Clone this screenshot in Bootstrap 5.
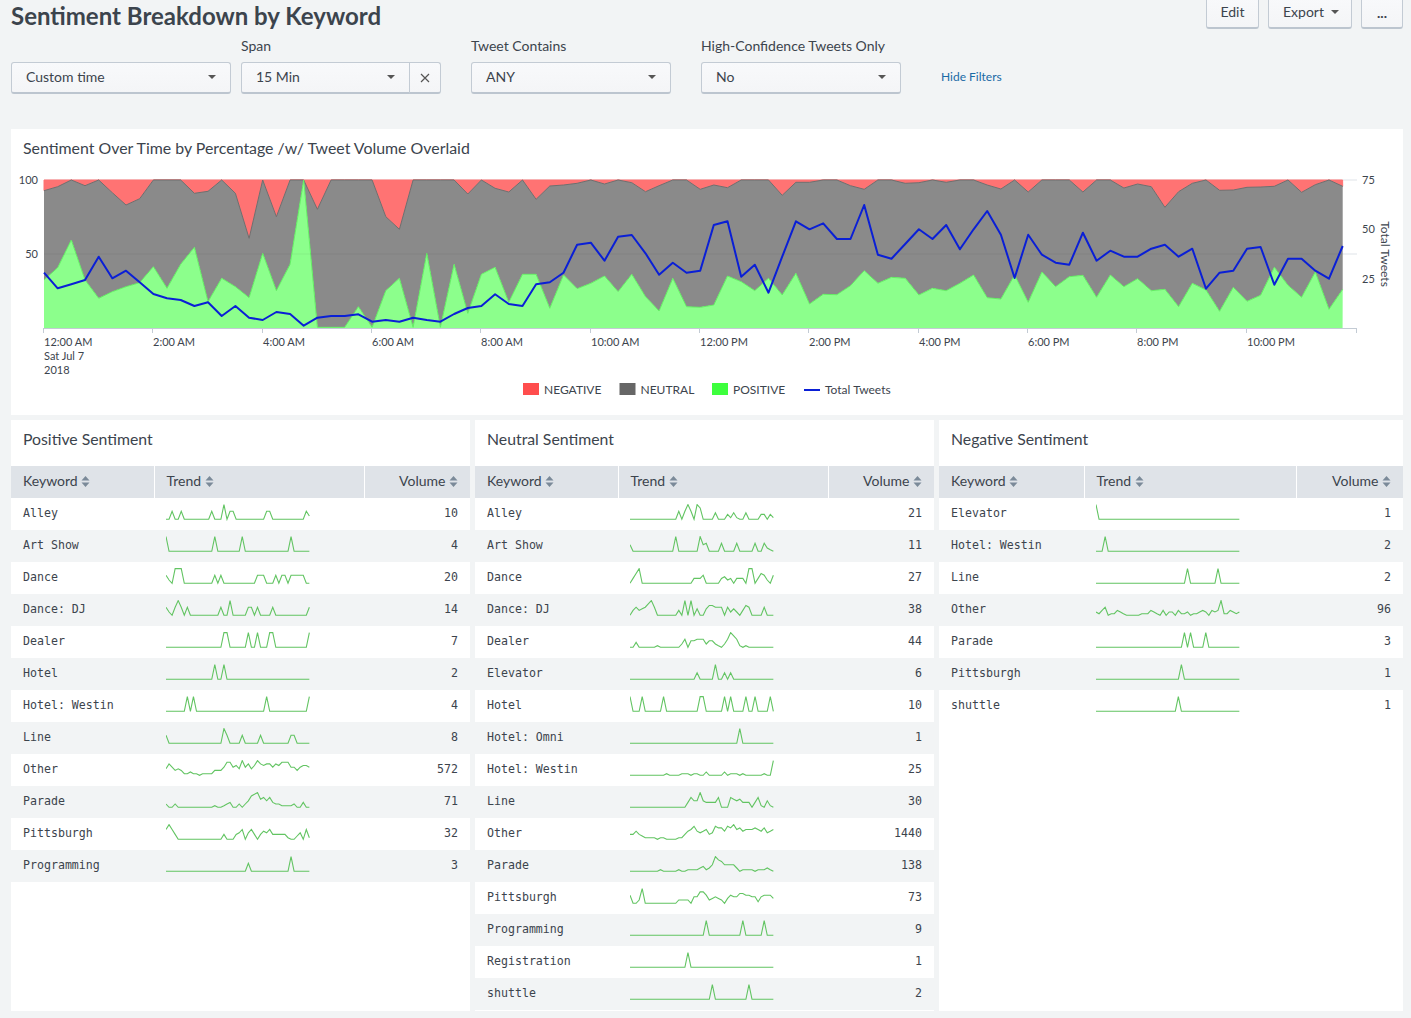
<!DOCTYPE html>
<html lang="en">
<head>
<meta charset="utf-8">
<title>Sentiment Breakdown by Keyword</title>
<link href="https://cdn.jsdelivr.net/npm/bootstrap@5.3.0/dist/css/bootstrap.min.css" rel="stylesheet">
<style>
html,body{height:100%}
body{background:#f2f4f5;color:#3c444d;font-family:"Lato","Liberation Sans",sans-serif;font-size:14px;overflow:hidden}
.dash-wrap{padding:0 8px 0 11px}
.dash-title{font-size:24px;line-height:32px;font-weight:700;margin:0}
.act-row{margin-top:-3px;gap:9px}
.act-btn,.flt-btn{background:linear-gradient(#f8f9fb,#f4f5f7);border:1px solid #c3cbd4;border-bottom:2px solid #bcc5cf;border-radius:3px;color:#3c444d;font-size:14px;height:32px;padding:0 14px 2px;display:flex;align-items:center}
.act-btn:hover,.flt-btn:hover{background:#f4f5f7;color:#3c444d;border-color:#c3cbd4}
.act-btn.dropdown-toggle::after,.flt-btn.dropdown-toggle::after{border-top-width:4px;border-left-width:4px;border-right-width:4px;border-top-color:#555;margin-left:8px}
.act-edit{width:53px;justify-content:center;padding:0 0 2px}
.act-export{width:84px;padding:0 0 2px 14px}
.act-export.dropdown-toggle::after{margin-left:7px}
.act-more{width:42px;justify-content:center;padding:0;font-weight:700}
.flt-row{margin-top:4px;gap:10px}
.flt-label{font-size:14px;line-height:20px;height:20px;margin-bottom:6px}
.flt-btn{justify-content:space-between;width:200px;text-align:left}
.flt-first{width:220px}
.flt-wide{margin-left:20px}
.flt-span .flt-btn{width:169px;border-radius:3px 0 0 3px}
.flt-span .flt-x{width:32px;flex:0 0 32px;border-radius:0 3px 3px 0;padding:0;justify-content:center}
.flt-link{font-size:12px;color:#1a6aa5;text-decoration:none;margin-left:30px;line-height:30px;height:32px}
.chart-panel{background:#fff;margin-top:35px;height:286px}
.chart-head{height:40px;padding:9px 12px 0;font-size:15.9px;line-height:20px}
.chart-svg{display:block;width:1392px;height:246px}
.chart-svg text{font-family:"Lato","Liberation Sans",sans-serif;font-size:12px;fill:#3c444d}
.chart-svg text.tick-txt{font-size:11px}
.panel-row{gap:5px;margin-top:5px}
.kw-panel{background:#fff;height:591px;flex:0 0 459px}
.kw-panel.kw-last{flex:0 0 464px}
.kw-head{height:46px;padding:9px 12px 0;font-size:15.8px;line-height:20px}
.kw-table{table-layout:fixed;width:100%;margin:0;--bs-table-bg:transparent;color:#3c444d}
.kw-table th{background:#dfe3e8;font-weight:400;font-size:14px;height:32px;padding:0 12px 3px;border:0;border-left:1px solid #fff;vertical-align:middle;color:#3c444d}
.kw-table th:first-child{border-left:0}
.kw-table td{height:32px;padding:0 12px;border:0;vertical-align:middle;font-family:"DejaVu Sans Mono","Liberation Mono",monospace;font-size:11.6px;color:#3c444d}
.kw-table tbody tr:nth-of-type(even) td{background:#f2f4f5}
.spark{display:block;width:144px;height:20px}
.spark polyline{fill:none;stroke:#62c462;stroke-width:1.1}
.sort-ico{display:inline-block;width:9px;height:11px;margin-left:0;vertical-align:-1px}
.sort-ico path{fill:#7b8a99}
</style>
</head>
<body>
<div class="dash-wrap">
  <div class="d-flex justify-content-between">
    <h1 class="dash-title">Sentiment Breakdown by Keyword</h1>
    <div class="d-flex act-row">
      <button type="button" class="btn act-btn act-edit">Edit</button>
      <button type="button" class="btn act-btn act-export dropdown-toggle">Export</button>
      <button type="button" class="btn act-btn act-more">...</button>
    </div>
  </div>
  <div class="d-flex align-items-end flt-row">
    <div><button type="button" class="btn flt-btn flt-first dropdown-toggle">Custom time</button></div>
    <div>
      <div class="flt-label">Span</div>
      <div class="btn-group flt-span">
        <button type="button" class="btn flt-btn dropdown-toggle">15 Min</button>
        <button type="button" class="btn flt-btn flt-x" aria-label="Clear"><svg width="10" height="10" viewBox="0 0 10 10"><path d="M1 1L9 9M9 1L1 9" stroke="#555" stroke-width="1.2" fill="none"/></svg></button>
      </div>
    </div>
    <div class="flt-wide">
      <div class="flt-label">Tweet Contains</div>
      <button type="button" class="btn flt-btn dropdown-toggle">ANY</button>
    </div>
    <div class="flt-wide">
      <div class="flt-label">High-Confidence Tweets Only</div>
      <button type="button" class="btn flt-btn dropdown-toggle">No</button>
    </div>
    <a href="#" class="flt-link">Hide Filters</a>
  </div>

  <div class="chart-panel">
    <div class="chart-head">Sentiment Over Time by Percentage /w/ Tweet Volume Overlaid</div>
    <svg class="chart-svg" id="chart" viewBox="11 169 1392 246"></svg>
  </div>

  <div class="d-flex panel-row">
    <div class="kw-panel" data-cols="143,210,106" id="pPos"><div class="kw-head">Positive Sentiment</div></div>
    <div class="kw-panel" data-cols="143,210,106" id="pNeu"><div class="kw-head">Neutral Sentiment</div></div>
    <div class="kw-panel kw-last" data-cols="145,212,107" id="pNeg"><div class="kw-head">Negative Sentiment</div></div>
  </div>
</div>

<script src="https://cdn.jsdelivr.net/npm/bootstrap@5.3.0/dist/js/bootstrap.bundle.min.js"></script>
<script>
// values below are read off the chart in 1/3-pixel units (page y = 170 + v/3)
var neg=[62,50,30,47,30,68,105,86,30,30,30,70,64,30,70,205,30,140,30,30,118,30,30,30,30,140,178,30,30,30,30,72,
30,55,66,30,88,48,45,40,30,42,30,38,65,47,30,30,58,45,53,30,30,30,76,37,37,30,30,47,58,30,30,40,38,30,
37,30,30,45,57,30,66,30,30,30,66,30,30,54,42,50,112,65,40,30,61,60,52,51,49,30,67,44,30,49];
var pos=[330,293,210,330,385,365,350,338,290,355,283,232,395,325,350,383,250,362,283,30,472,472,472,410,472,362,325,472,250,472,283,430,
313,292,397,313,313,415,315,356,340,318,365,313,380,423,325,410,412,405,318,335,362,325,375,310,402,373,374,347,302,340,322,325,375,355,
362,340,315,383,387,315,397,306,350,320,316,382,315,350,326,362,358,410,340,360,424,352,394,376,292,346,382,306,418,358];
var vol=[308,355,343,330,260,325,302,337,372,385,390,408,397,438,408,443,450,426,432,467,443,438,438,433,455,450,455,443,450,455,432,414,
408,373,402,408,343,337,308,224,218,272,200,195,250,314,278,308,302,165,154,320,284,368,260,154,178,160,207,207,105,254,266,222,178,207,
165,238,178,123,194,324,194,254,278,284,188,272,242,260,260,236,224,260,236,356,308,302,236,231,344,266,266,302,326,228];
var X=function(i){return +(44+i*13.67).toFixed(1)},Y=function(v){return +(170+v/3).toFixed(1)};
function pts(a){return a.map(function(v,i){return X(i)+','+Y(v)}).join(' ')}
function rev(a){return a.map(function(v,i){return [i,v]}).reverse().map(function(p){return X(p[0])+','+Y(p[1])}).join(' ')}
var s='';
s+='<line x1="44" y1="180" x2="1357" y2="180" stroke="#dfe3e8"/>';
s+='<polygon points="44,180 1342.6,180 '+rev(neg)+'" fill="#ff7373" stroke="#ff7373"/>';
s+='<polygon points="'+pts(neg)+' '+rev(pos)+'" fill="#8a8a8a"/>';
s+='<polyline points="'+pts(neg)+'" fill="none" stroke="#6f6f6f"/>';
s+='<polygon points="'+pts(pos)+' 1342.6,328 44,328" fill="#8cff8c"/>';
s+='<polyline points="'+pts(pos)+'" fill="none" stroke="#62ee62"/>';
s+='<line x1="44" y1="254" x2="1343" y2="254" stroke="#000" stroke-opacity=".06"/>';
s+='<line x1="1343" y1="254" x2="1357" y2="254" stroke="#dfe3e8"/>';
s+='<line x1="43.5" y1="328.5" x2="1356.5" y2="328.5" stroke="#c3cbd4"/>';
var ticks=[[43.5,'12:00 AM'],[152.5,'2:00 AM'],[262.5,'4:00 AM'],[371.5,'6:00 AM'],[480.5,'8:00 AM'],[590.5,'10:00 AM'],[699.5,'12:00 PM'],[808.5,'2:00 PM'],[918.5,'4:00 PM'],[1027.5,'6:00 PM'],[1136.5,'8:00 PM'],[1246.5,'10:00 PM'],[1356.5,'']];
ticks.forEach(function(t){s+='<line x1="'+t[0]+'" y1="328" x2="'+t[0]+'" y2="333" stroke="#c3cbd4"/>';if(t[1])s+='<text class="tick-txt" x="'+(t[0]+.5)+'" y="346">'+t[1]+'</text>';});
s+='<text class="tick-txt" x="44" y="360">Sat Jul 7</text><text class="tick-txt" x="44" y="374">2018</text>';
s+='<text class="tick-txt" x="38" y="184" text-anchor="end">100</text><text class="tick-txt" x="38" y="258" text-anchor="end">50</text>';
s+='<text class="tick-txt" x="1362" y="184">75</text><text class="tick-txt" x="1362" y="233">50</text><text class="tick-txt" x="1362" y="283">25</text>';
s+='<text transform="translate(1381,254) rotate(90)" text-anchor="middle">Total Tweets</text>';
s+='<polyline points="'+pts(vol)+'" fill="none" stroke="#0a1fd6" stroke-width="2" stroke-linejoin="round"/>';
s+='<rect x="523" y="383" width="16" height="12" fill="#ff4d4d"/><text x="544" y="394">NEGATIVE</text>';
s+='<rect x="619.5" y="383" width="16" height="12" fill="#666"/><text x="640.5" y="394">NEUTRAL</text>';
s+='<rect x="712" y="383" width="16" height="12" fill="#3dff3d"/><text x="733" y="394">POSITIVE</text>';
s+='<line x1="804" y1="390" x2="820" y2="390" stroke="#0a1fd6" stroke-width="2"/><text x="825" y="394">Total Tweets</text>';
document.getElementById('chart').innerHTML=s;

function spark(d){
  var v=[];for(var i=0;i<48;i++)v.push(0);
  if(d.indexOf(':')>=0){d.split(' ').forEach(function(p){var k=p.split(':');v[+k[0]]=+k[1];});}
  else{for(var j=0;j<48;j++)v[j]=+d.charAt(j);}
  var p=v.map(function(n,i){return (i*3.05).toFixed(2)+','+(15.3-n/9*14.67).toFixed(1)}).join(' ');
  return '<svg class="spark" viewBox="0 0 144 20"><polyline points="'+p+'"/></svg>';
}
var data={
pPos:[
['Alley','2:5 5:5 15:5 19:9 21:5 22:5 33:5 34:5 46:5 47:2',10],
['Art Show','0:9 16:9 25:9 41:9',4],
['Dance','0:5 1:2 3:9 4:9 5:9 16:5 18:5 30:5 31:5 32:5 36:5 38:5 39:5 41:5 42:5 43:5 44:5 45:5',20],
['Dance: DJ','0:5 1:2 3:5 4:9 5:5 7:5 18:5 21:9 27:5 28:5 30:5 35:5 47:5',14],
['Dealer','19:9 20:9 27:9 30:9 34:9 35:9 47:9',7],
['Hotel','16:9 19:9',2],
['Hotel: Westin','7:9 9:9 33:9 47:9',4],
['Line','0:5 19:9 20:5 25:5 31:5 41:5 42:5',8],
['Other','4753431121'+'1011113335'+'8856495746'+'9767757688'+'85535665',572],
['Parade','2002000000'+'0000001001'+'2300202478'+'9564632211'+'11200300',71],
['Pittsburgh','6963000000'+'0000000003'+'0003460463'+'0354633333'+'10024061',32],
['Programming','27:5 41:9',3]],
pNeu:[
['Alley','16:5 18:5 19:9 20:5 22:9 23:7 28:4 32:3 33:1 34:4 35:1 38:4 43:3 44:3 46:3 47:1',21],
['Art Show','0:4 15:9 23:9 24:4 25:5 30:5 35:5 41:5 44:5 45:2 46:1',11],
['Dance','1:3 2:6 3:9 21:3 22:3 23:3 24:5 30:3 31:4 32:2 33:3 35:3 36:3 37:3 39:9 40:9 42:3 43:6 44:5 45:2 47:5',27],
['Dance: DJ','1:3 2:5 3:3 4:4 5:5 6:7 7:9 8:5 16:3 18:9 20:9 22:4 25:4 26:6 27:6 28:5 29:5 30:5 32:5 33:2 34:4 35:2 37:3 38:6 39:5 44:5',38],
['Dealer','2:3 9:1 17:2 18:5 20:4 21:4 22:5 23:5 24:5 25:2 26:4 27:4 28:2 29:1 31:2 32:5 33:9 34:7 35:5 36:1 38:1',44],
['Elevator','22:4 28:9 31:4 33:4',6],
['Hotel','0:9 4:9 11:9 23:9 24:9 31:9 33:9 38:9 41:9 46:9',10],
['Hotel: Omni','36:9',1],
['Hotel: Westin','12:1 17:1 18:1 19:1 21:1 22:1 25:2 31:2 33:1 34:1 35:1 37:1 44:1 47:9',25],
['Line','19:3 20:6 21:4 22:4 23:9 24:4 25:3 26:3 27:3 28:3 29:6 33:6 34:5 35:4 36:5 37:3 38:3 39:3 41:3 42:6 43:1 45:4 46:1',30],
['Other','3353211110'+'1100001135'+'6854563487'+'7587967566'+'67657456',1440],
['Parade','0000000000'+'1000001001'+'1112312497'+'6444420111'+'10111210',138],
['Pittsburgh','5002900000'+'0000002222'+'0447752343'+'2035446655'+'44145553',73],
['Programming','25:9 37:9 44:9',9],
['Registration','19:9',1],
['shuttle','27:9 39:9',2]],
pNeg:[
['Elevator','0:9',1],
['Hotel: Westin','3:9',2],
['Line','30:9 40:9',2],
['Other','2135011321'+'0000011132'+'1030220311'+'2011232032'+'39113212',96],
['Parade','29:9 31:9 36:9',3],
['Pittsburgh','28:9',1],
['shuttle','27:9',1]]};
var sortIco='<svg class="sort-ico" viewBox="0 0 9 11"><path d="M4.5 0L8.5 4.5H.5zM4.5 11L.5 6.5H8.5z"/></svg>';
Object.keys(data).forEach(function(id){
  var el=document.getElementById(id),c=el.getAttribute('data-cols').split(',');
  var h='<table class="table kw-table"><colgroup><col style="width:'+c[0]+'px"><col style="width:'+c[1]+'px"><col style="width:'+c[2]+'px"></colgroup><thead><tr><th>Keyword '+sortIco+'</th><th>Trend '+sortIco+'</th><th class="text-end">Volume '+sortIco+'</th></tr></thead><tbody>';
  data[id].forEach(function(r){h+='<tr><td>'+r[0]+'</td><td>'+spark(r[1])+'</td><td class="text-end">'+r[2]+'</td></tr>';});
  el.insertAdjacentHTML('beforeend',h+'</tbody></table>');
});
</script>
</body>
</html>
